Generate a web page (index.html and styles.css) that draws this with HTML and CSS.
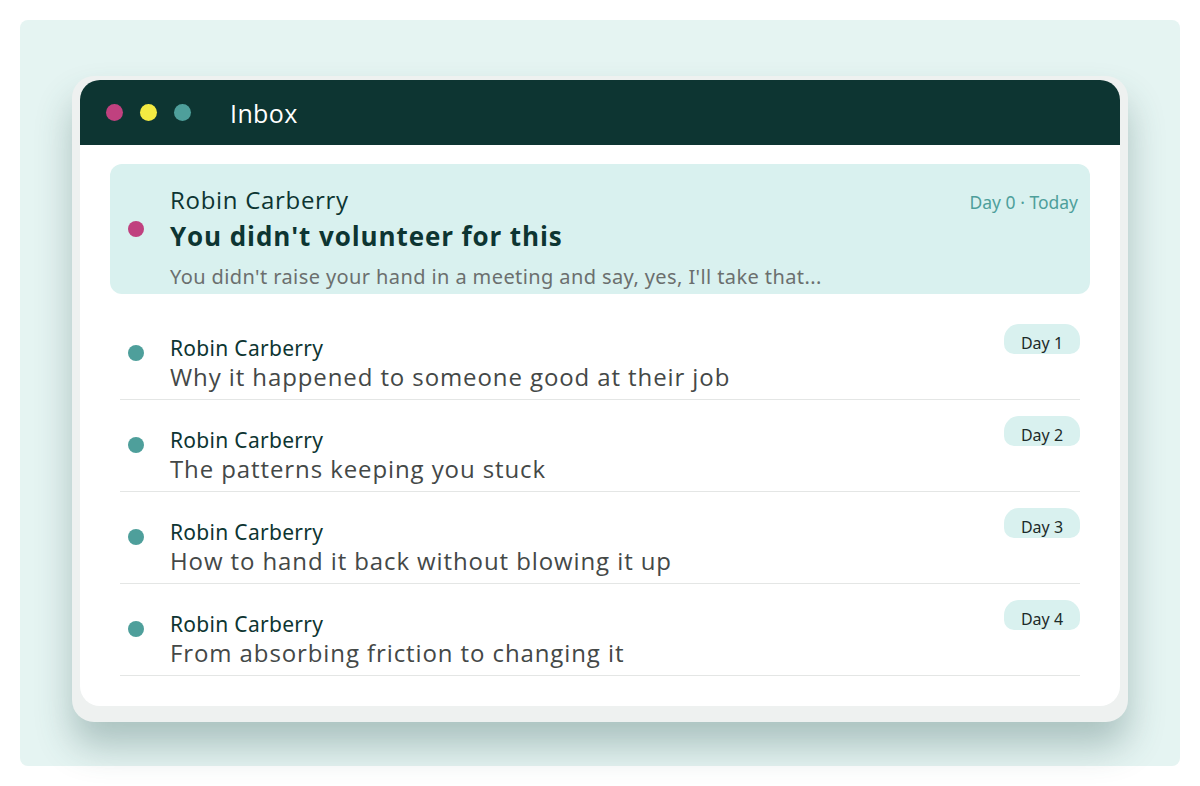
FILE: index.html
```html
<!DOCTYPE html>
<html>
<head>
  <title>Inbox</title>
  <link rel="stylesheet" href="styles.css">
</head>
<body>
  <div class="stage">
    <div class="frame">
      <div class="window">
        <header class="title-bar">
          <span class="light light-red"></span>
          <span class="light light-yellow"></span>
          <span class="light light-green"></span>
          <h1 class="title">Inbox</h1>
        </header>

        <div class="mail-list">
          <!-- Current email -->
          <div class="mail-open">
            <span class="dot dot-new"></span>
            <div class="mail-open-body">
              <div class="open-name">Robin Carberry</div>
              <div class="open-subject">You didn't volunteer for this</div>
              <div class="open-preview">You didn't raise your hand in a meeting and say, yes, I'll take that...</div>
            </div>
            <div class="open-date">Day 0 · Today</div>
          </div>

          <!-- Upcoming emails -->
          <div class="mail-row">
            <span class="dot"></span>
            <div class="mail-body">
              <div class="mail-name">Robin Carberry</div>
              <div class="mail-subject">Why it happened to someone good at their job</div>
            </div>
            <span class="day-pill">Day 1</span>
          </div>

          <div class="mail-row">
            <span class="dot"></span>
            <div class="mail-body">
              <div class="mail-name">Robin Carberry</div>
              <div class="mail-subject">The patterns keeping you stuck</div>
            </div>
            <span class="day-pill">Day 2</span>
          </div>

          <div class="mail-row">
            <span class="dot"></span>
            <div class="mail-body">
              <div class="mail-name">Robin Carberry</div>
              <div class="mail-subject">How to hand it back without blowing it up</div>
            </div>
            <span class="day-pill">Day 3</span>
          </div>

          <div class="mail-row">
            <span class="dot"></span>
            <div class="mail-body">
              <div class="mail-name">Robin Carberry</div>
              <div class="mail-subject">From absorbing friction to changing it</div>
            </div>
            <span class="day-pill">Day 4</span>
          </div>
        </div>
      </div>
    </div>
  </div>
</body>
</html>
```

FILE: styles.css
```css
body {
  margin: 0;
  padding: 20px;
  background-color: #fff;
  font-family: "Noto Sans", sans-serif;
}

.stage {
  height: 746px;
  box-sizing: border-box;
  padding: 56px 52px 0;
  background-color: #e5f4f2;
  border-radius: 8px;
}

.frame {
  padding: 4px 8px 16px;
  background-color: #eef1f0;
  border-radius: 22px;
  box-shadow: 0 24px 36px rgba(50, 90, 86, 0.32);
}

.window {
  height: 626px;
  background-color: #fff;
  border-radius: 20px;
  overflow: hidden;
}

.title-bar {
  height: 65px;
  background-color: #0d3532;
  display: flex;
  align-items: center;
  padding-left: 26px;
}

.light {
  width: 17px;
  height: 17px;
  border-radius: 50%;
  margin-right: 17px;
}

.light-red { background-color: #c0417f; }
.light-yellow { background-color: #f3ea42; }
.light-green { background-color: #4e9f9b; }

.title {
  margin: 0 0 0 22px;
  color: #fff;
  font-family: "Open Sans", sans-serif;
  font-weight: 500;
  font-size: 25px;
  letter-spacing: 0.4px;
}

.mail-list {
  padding: 19px 30px 0;
}

.mail-open {
  height: 130px;
  box-sizing: border-box;
  display: flex;
  align-items: center;
  padding: 0 12px 0 18px;
  background-color: #d9f1ef;
  border-radius: 12px;
  margin-bottom: 14px;
}

.dot {
  flex: none;
  width: 16px;
  height: 16px;
  border-radius: 50%;
  background-color: #4e9f9b;
}

.dot-new {
  background-color: #c0417f;
}

.mail-open-body {
  flex: 1;
  margin-left: 26px;
  align-self: flex-start;
  padding-top: 22px;
}

.open-name {
  font-family: "Open Sans", sans-serif;
  font-size: 24px;
  font-weight: 500;
  line-height: 28px;
  letter-spacing: 0.7px;
  color: #0d3532;
}

.open-subject {
  margin-top: 4px;
  font-family: "Open Sans", sans-serif;
  font-size: 26px;
  font-weight: 700;
  line-height: 36px;
  letter-spacing: 0.9px;
  color: #0d3532;
}

.open-preview {
  margin-top: 8px;
  font-size: 20px;
  line-height: 30px;
  letter-spacing: 0.4px;
  color: #6b6f6e;
}

.open-date {
  align-self: flex-start;
  margin-top: 26px;
  font-size: 17.5px;
  line-height: 24px;
  color: #4e9f9b;
}

.mail-row {
  display: flex;
  align-items: flex-start;
  margin: 0 10px;
  padding: 16px 0 6px;
  border-bottom: 1px solid #e4e6e5;
}

.mail-row .dot {
  margin: 21px 0 0 8px;
}

.mail-body {
  flex: 1;
  margin-left: 26px;
  padding-top: 11px;
}

.mail-name {
  font-size: 21px;
  line-height: 26px;
  letter-spacing: 0.3px;
  color: #0d3532;
}

.mail-subject {
  font-family: "Open Sans", sans-serif;
  font-size: 24px;
  font-weight: 500;
  line-height: 32px;
  letter-spacing: 0.9px;
  color: #444847;
}

.day-pill {
  width: 76px;
  height: 30px;
  box-sizing: border-box;
  padding-top: 8px;
  text-align: center;
  font-size: 16px;
  line-height: 22px;
  color: #1d2b29;
  background-color: #d9f1ef;
  border-radius: 15px 15px 10px 10px;
}
```
